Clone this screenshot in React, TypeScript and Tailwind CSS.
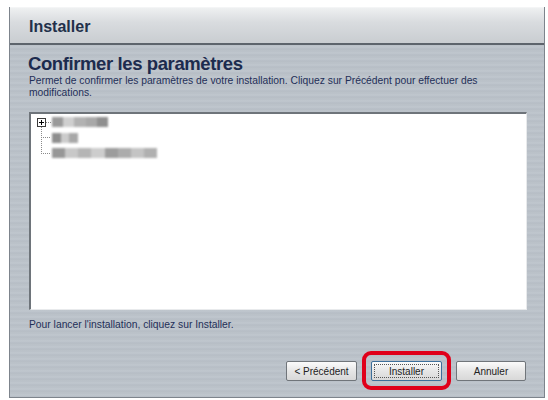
import React from "react";

function Blur({ w, parts }: { w: number; parts: string[] }) {
  return (
    <div className="flex h-[10px] blur-[0.8px]" style={{ width: w }}>
      {parts.map((c, i) => (
        <div key={i} className="h-full flex-1" style={{ backgroundColor: c }} />
      ))}
    </div>
  );
}

export default function App() {
  return (
    <div className="w-[548px] h-[400px] bg-white pt-[7px] pl-[9px] pr-[3px] pb-[2px] font-['Liberation_Sans',Arial,sans-serif]">
      <div className="h-full flex flex-col border-l border-r border-b border-[#7d848c] bg-[#bcc3ca]">
        <div className="h-[36px] shrink-0 flex items-center pl-[19px] bg-[linear-gradient(#eef0f1,#d9dcdf_40%,#c9cdd1)] border-t border-[#f4f5f6]">
          <span className="text-[16px] font-bold text-[#22304a] leading-none mt-[2px]">Installer</span>
        </div>
        <div className="h-[2px] shrink-0 bg-[#5d646c]" />
        <div className="flex-1 flex flex-col bg-[repeating-linear-gradient(#b9c0c8_0px,#c0c7ce_2px,#b6bdc5_4px,#bcc3ca_6px)] pl-[19px] pr-[17px]">
          <div className="mt-[9px] -ml-[1px] text-[18.5px] font-bold text-[#1c2b4e] leading-[20px] tracking-[-0.4px]">Confirmer les paramètres</div>
          <div className="text-[10.3px] text-[#1f2f58] leading-[12px] mt-[1px]">
            Permet de confirmer les paramètres de votre installation. Cliquez sur Précédent pour effectuer des
            <br />
            modifications.
          </div>
          <div className="mt-[13px] h-[198px] bg-white border-t-2 border-l-2 border-[#6e747a] border-r border-b border-r-[#e8eaec] border-b-[#e8eaec] relative">
            <div className="absolute left-[6px] top-[4px] w-[9px] h-[9px] border border-[#3a3a3a] bg-white flex items-center justify-center">
              <div className="relative w-[5px] h-[5px]">
                <div className="absolute left-0 top-[2px] w-[5px] h-[1px] bg-black" />
                <div className="absolute left-[2px] top-0 w-[1px] h-[5px] bg-black" />
              </div>
            </div>
            <div className="absolute left-[10px] top-[13px] h-[27px] border-l border-dotted border-[#8a8a8a]" />
            <div className="absolute left-[15px] top-[8px] w-[5px] border-t border-dotted border-[#8a8a8a]" />
            <div className="absolute left-[10px] top-[23px] w-[9px] border-t border-dotted border-[#8a8a8a]" />
            <div className="absolute left-[10px] top-[39px] w-[9px] border-t border-dotted border-[#8a8a8a]" />
            <div className="absolute left-[21px] top-[3px]">
              <Blur w={56} parts={["#9a9a9a", "#cfcfcf", "#b2b2b2", "#a8a8a8", "#8f8f8f"]} />
            </div>
            <div className="absolute left-[21px] top-[19px]">
              <Blur w={26} parts={["#8e8e8e", "#cccccc", "#a8a8a8"]} />
            </div>
            <div className="absolute left-[21px] top-[34px]">
              <Blur w={105} parts={["#979797", "#c8c8c8", "#b5b5b5", "#cdcdcd", "#9c9c9c", "#acacac", "#c4c4c4", "#b0b0b0"]} />
            </div>
          </div>
          <div className="mt-[9px] text-[10.3px] text-[#1f2f58] leading-[12px]">Pour lancer l'installation, cliquez sur Installer.</div>
          <div className="mt-[30px] flex items-center justify-end gap-[14px] pr-[1px]">
            <button className="w-[71px] h-[20px] bg-[linear-gradient(#fbfbfb,#e6e6e6_50%,#d8d8d8)] border border-[#70757a] rounded-[2px] text-[10px] text-[#222]">&lt; Précédent</button>
            <div className="relative">
              <div className="absolute -left-[9px] -right-[9px] -top-[10px] -bottom-[9px] border-[4px] border-[#e0001a] rounded-[9px]" />
              <button className="w-[71px] h-[20px] bg-[linear-gradient(#fbfbfb,#e6e6e6_50%,#d8d8d8)] border border-[#3d6f9a] rounded-[2px] text-[10px] text-[#222] flex items-center justify-center p-[2px]">
                <span className="w-full h-full border border-dotted border-[#555] flex items-center justify-center">Installer</span>
              </button>
            </div>
            <button className="w-[70px] h-[20px] bg-[linear-gradient(#fbfbfb,#e6e6e6_50%,#d8d8d8)] border border-[#70757a] rounded-[2px] text-[10px] text-[#222]">Annuler</button>
          </div>
        </div>
      </div>
    </div>
  );
}
